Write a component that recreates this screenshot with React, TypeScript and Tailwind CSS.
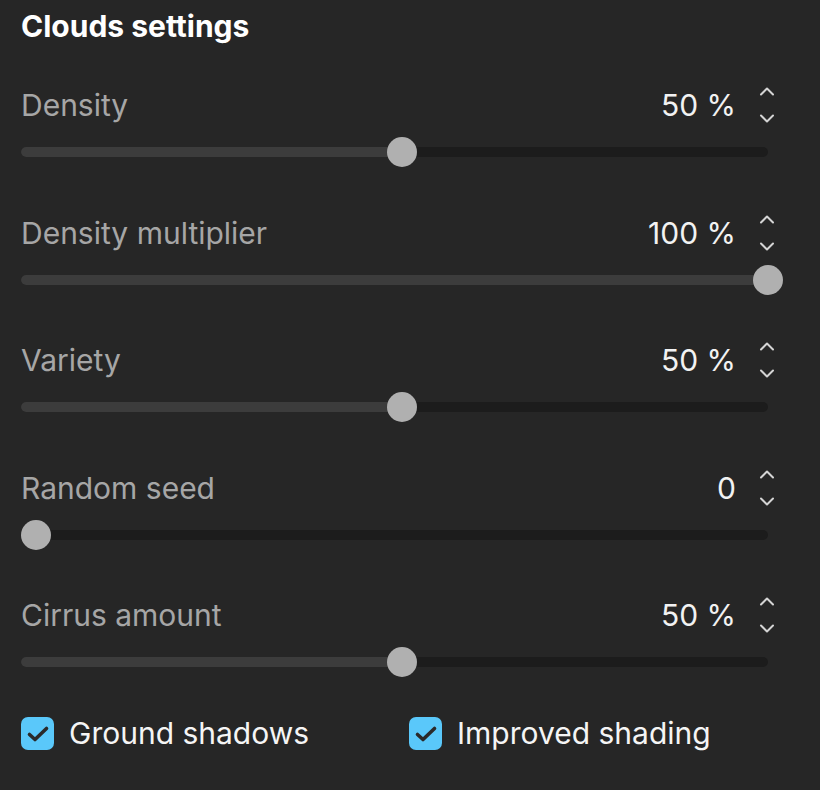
import React from 'react'

type Row = {
  label: string
  value: string
  pos: number
}

const ROWS: Row[] = [
  { label: 'Density', value: '50 %', pos: 0.5 },
  { label: 'Density multiplier', value: '100 %', pos: 1 },
  { label: 'Variety', value: '50 %', pos: 0.5 },
  { label: 'Random seed', value: '0', pos: 0 },
  { label: 'Cirrus amount', value: '50 %', pos: 0.5 },
]

const TRACK_RANGE = 732

function Chevron({ up }: { up?: boolean }) {
  return (
    <svg width="16" height="9" viewBox="0 0 16 9" fill="none">
      <path
        d={up ? 'M2 7.5 L8 1.5 L14 7.5' : 'M2 1.5 L8 7.5 L14 1.5'}
        stroke="#d4d4d4"
        strokeWidth="2"
        strokeLinecap="round"
        strokeLinejoin="round"
      />
    </svg>
  )
}

function SliderRow({ row }: { row: Row }) {
  const thumbLeft = row.pos * TRACK_RANGE
  return (
    <div className="flex flex-col">
      <div className="flex h-[40px] items-center justify-between">
        <span className="text-[30px] leading-[40px] text-[#a6a6a6]">{row.label}</span>
        <div className="flex h-[40px] items-center">
          <span className="text-[30px] leading-[40px] text-[#f2f2f2]">{row.value}</span>
          <div className="ml-[23px] mr-[-7px] flex h-[40px] flex-col items-center justify-between py-[2px]">
            <Chevron up />
            <Chevron />
          </div>
        </div>
      </div>
      <div className="relative mt-[22px] h-[10px] w-[747px] rounded-full bg-[#1c1c1c]">
        <div
          className="absolute left-0 top-0 h-[10px] rounded-full bg-[#3c3c3c]"
          style={{ width: 15 + thumbLeft }}
        />
        <div
          className="absolute top-[-10px] h-[30px] w-[30px] rounded-full bg-[#b0b0b0]"
          style={{ left: thumbLeft }}
        />
      </div>
    </div>
  )
}

function Check({ label }: { label: string }) {
  return (
    <div className="flex items-center gap-[15px]">
      <div className="flex h-[33px] w-[33px] items-center justify-center rounded-[7px] bg-[#5ac8fa]">
        <svg width="24" height="18" viewBox="0 0 24 18" fill="none">
          <path
            d="M3.5 9.5 L9 14.5 L20.5 3.5"
            stroke="#2a2a2a"
            strokeWidth="3.6"
            strokeLinecap="round"
            strokeLinejoin="round"
          />
        </svg>
      </div>
      <span className="text-[30px] leading-[33px] text-[#f5f5f5]">{label}</span>
    </div>
  )
}

export default function App() {
  return (
    <div
      className="h-[790px] w-[820px] bg-[#262626] pl-[21px] pr-[52px]"
      style={{ fontFamily: 'Inter, "Noto Sans", sans-serif' }}
    >
      <div className="flex h-[50px] items-center pt-[1px]">
        <h1 className="text-[30px] font-bold leading-[40px] text-white">Clouds settings</h1>
      </div>
      <div className="mt-[35px] flex flex-col gap-[55.5px]">
        {ROWS.map((r) => (
          <SliderRow key={r.label} row={r} />
        ))}
      </div>
      <div className="mt-[50px] flex">
        <div className="w-[388px]">
          <Check label="Ground shadows" />
        </div>
        <Check label="Improved shading" />
      </div>
    </div>
  )
}
